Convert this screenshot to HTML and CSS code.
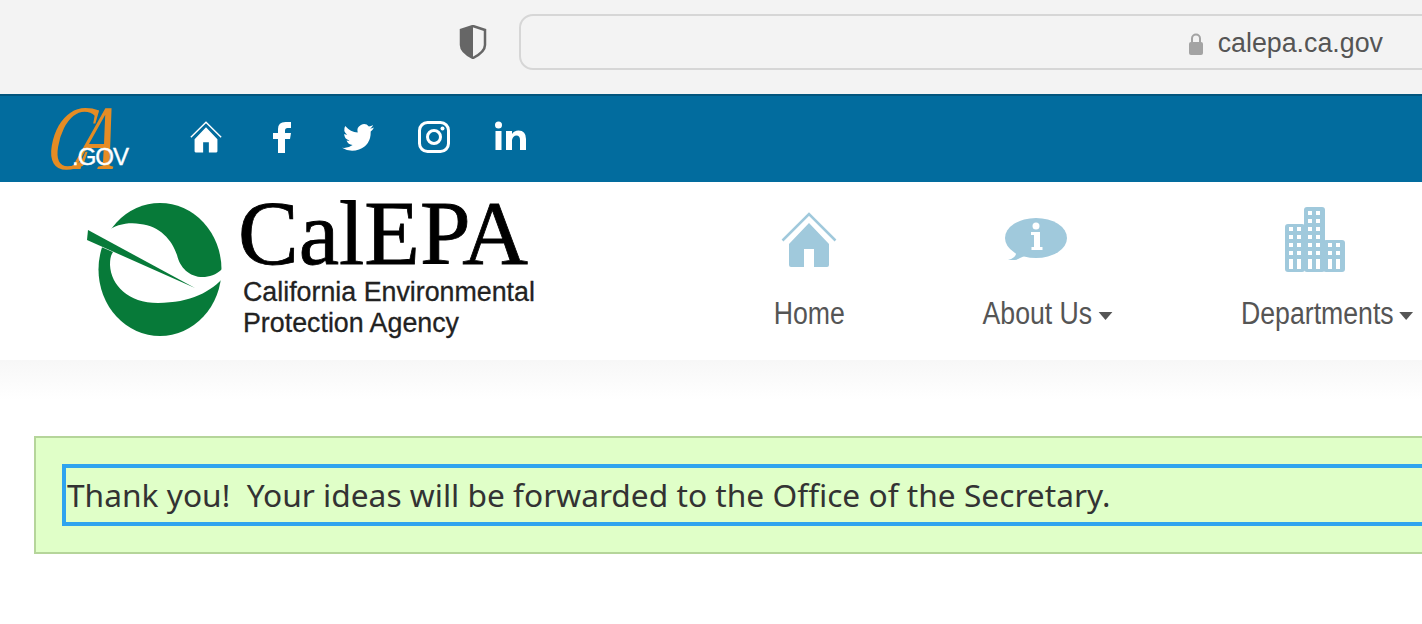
FILE: index.html
```html
<!DOCTYPE html>
<html lang="en">
<head>
    <meta charset="UTF-8">
    <meta name="viewport" content="width=device-width, initial-scale=1.0">
    <title>CalEPA - Thank you</title>
    <link rel="stylesheet" href="styles.css">
</head>
<body>
    <svg class="defs" width="0" height="0" aria-hidden="true">
        <symbol id="house" viewBox="0 0 56 56">
            <path d="M1.5 28.500 28 2l26.500 26.500" fill="none" stroke="currentColor" stroke-width="2.500"/>
            <path d="M28 11l20 21v21q0 2-2 2H33V37H23v18H10q-2 0-2-2V32z" fill="currentColor"/>
        </symbol>
    </svg>

    <!-- browser toolbar -->
    <div class="toolbar">
        <svg class="shield" viewBox="0 0 28 34">
            <path d="M14 1l12 4v15q0 7-12 13Q2 27 2 20V5z" fill="#f3f3f3" stroke="#666" stroke-width="2.500"/>
            <path d="M14 1L2 5v15q0 7 12 13z" fill="#666"/>
        </svg>
        <div class="address">
            <svg class="lock" viewBox="0 0 16 24">
                <path d="M4 11V6.500a4 4 0 0 1 8 0V11" fill="none" stroke="#a3a3a3" stroke-width="2"/>
                <rect x="1" y="10" width="14" height="13" rx="2" fill="#a3a3a3"/>
            </svg>
            <span class="url">calepa.ca.gov</span>
        </div>
    </div>

    <!-- state bar -->
    <div class="state-bar">
        <div class="ca-logo">
            <span class="ca-script">CA</span>
            <span class="ca-gov">.GOV</span>
        </div>
        <div class="social">
            <svg class="social-icon home-icon"><use href="#house"/></svg>
            <svg class="social-icon" viewBox="0 0 32 32">
                <path d="M12 32V18H7v-6h5V8q0-7 7.500-7H25v6h-3.500Q19 7 19 9.500V12h6l-1 6h-5v14z" fill="#fff"/>
            </svg>
            <svg class="social-icon" viewBox="0 0 32 32">
                <path d="M32 6.500q-1.800.8-3.800 1 2.100-1.300 2.900-3.600-2 1.200-4.200 1.600a6.500 6.500 0 0 0-11.200 6Q8.500 11 3.200 5q-2.700 5 2 8.800-1.600 0-3-.8 0 5 5.300 6.500-1.500.4-3 .1 1.500 4.200 6.100 4.500Q6.500 27.500 0 26.800q8 5 17 1.800Q29 24 28.700 10.500 30.800 8.900 32 6.500z" fill="#fff"/>
            </svg>
            <svg class="social-icon" viewBox="0 0 32 32">
                <rect x="1.500" y="1.500" width="29" height="29" rx="8" fill="none" stroke="#fff" stroke-width="3"/>
                <circle cx="16" cy="16" r="6.500" fill="none" stroke="#fff" stroke-width="3"/>
                <circle cx="24.500" cy="7.500" r="2" fill="#fff"/>
            </svg>
            <svg class="social-icon" viewBox="-1 0 32 32">
                <circle cx="3.500" cy="4" r="3.500" fill="#fff"/>
                <rect x="0.500" y="10" width="6" height="19" fill="#fff"/>
                <path d="M11 10h6v3q2-3.500 6.500-3.500Q31 9.500 31 18v11h-6V19q0-4.500-3.500-4.500T17 19v10h-6z" fill="#fff"/>
            </svg>
        </div>
    </div>

    <!-- site header -->
    <div class="site-header">
        <div class="brand">
            <svg class="brand-mark" viewBox="85 200 140 140">
                <ellipse cx="160" cy="269.500" rx="61.500" ry="66.500" fill="#077a39"/>
                <path d="M85 240l22-8c8-8 23-10 33-8 20 2 32 16 37 31 3 13 13 23 28 22 7-1 13-3 20-11l3 6c-13 18-35 31-70 31-30 0-47-18-48-38 0-7 1-10 3-13z" fill="#fff"/>
                <path d="M88 230l107 58-108-48z" fill="#077a39"/>
            </svg>
            <div class="brand-text">
                <div class="brand-name">CalEPA</div>
                <div class="brand-sub">California Environmental<br>Protection Agency</div>
            </div>
        </div>
        <div class="nav">
            <div class="nav-item nav-home">
                <svg class="nav-icon house-icon"><use href="#house"/></svg>
                <div class="nav-label">Home</div>
            </div>
            <div class="nav-item nav-about">
                <svg class="nav-icon bubble-icon" viewBox="0 0 62 42">
                    <ellipse cx="31" cy="20" rx="31" ry="20" fill="#a0c9dc"/>
                    <path d="M9 30l2 6q-1 4-8 6 8 1 12-2l7-3z" fill="#a0c9dc"/>
                    <circle cx="31" cy="8" r="3.500" fill="#fff"/>
                    <path d="M26 14h9v15h2.500v3h-11v-3H29V17h-3z" fill="#fff"/>
                </svg>
                <div class="nav-label">About Us<span class="caret"></span></div>
            </div>
            <div class="nav-item nav-depts">
                <svg class="nav-icon tower-icon" viewBox="0 0 60 65">
                    <rect x="0" y="17" width="20" height="48" rx="3" fill="#a0c9dc"/>
                    <rect x="19" y="0" width="21" height="65" rx="3" fill="#a0c9dc"/>
                    <rect x="38" y="33" width="22" height="32" rx="3" fill="#a0c9dc"/>
                    <path d="M6 20V60M14 20V60M25 4V60M33 4V60M45 36V60M53 36V60" stroke="#fff" stroke-width="4" stroke-dasharray="4 4" fill="none"/>
                    <path d="M6 52V62M14 52V62M25 52V62M33 52V62M45 52V62M53 52V62" stroke="#fff" stroke-width="4" fill="none"/>
                </svg>
                <div class="nav-label">Departments<span class="caret"></span></div>
            </div>
        </div>
    </div>
    <div class="header-fade"></div>

    <div class="alert">
        <div class="alert-focus">Thank you!&nbsp; Your ideas will be forwarded to the Office of the Secretary.</div>
    </div>
</body>
</html>
```

FILE: styles.css
```css
html, body {
    margin: 0;
    padding: 0;
    height: 624px;
    overflow: hidden;
    background: white;
}
.defs {
    display: block;
    height: 0;
}
.toolbar {
    height: 94px;
    box-sizing: border-box;
    padding: 14px 0 24px 459px;
    display: flex;
    align-items: stretch;
    background-color: #f3f3f3;
}
.shield {
    width: 28px;
    height: 34px;
    margin: 11px 32px 0 0;
}
.address {
    flex: 1;
    margin-right: -40px;
    padding: 3px 77px 0 0;
    display: flex;
    align-items: center;
    justify-content: flex-end;
    gap: 14px;
    border: 2px solid #d6d6d6;
    border-radius: 14px;
}
.lock {
    width: 16px;
    height: 24px;
}
.url {
    font-family: "Liberation Sans", Arial, sans-serif;
    font-size: 26.8px;
    color: #555;
}
.state-bar {
    height: 88px;
    box-sizing: border-box;
    padding-left: 44px;
    display: flex;
    align-items: center;
    background-color: #026c9e;
    border-top: 2px solid #02557d;
}
.ca-logo {
    position: relative;
    width: 84px;
    height: 64px;
}
.ca-script {
    display: block;
    font-family: "Liberation Serif", serif;
    font-style: italic;
    font-size: 92px;
    line-height: 62px;
    letter-spacing: -22px;
    color: #e58c24;
    transform-origin: left bottom;
    transform: skewX(-10deg) scaleX(0.72);
}
.ca-gov {
    position: absolute;
    left: 28px;
    bottom: 3px;
    font-family: "Liberation Sans", Arial, sans-serif;
    font-size: 24px;
    line-height: 22px;
    letter-spacing: -1px;
    color: white;
    -webkit-text-stroke: 0.4px white;
}
.social {
    margin: -4px 0 0 62px;
    display: flex;
    align-items: center;
    gap: 44px;
    color: white;
}
.social-icon {
    width: 32px;
    height: 32px;
}
.site-header {
    height: 178px;
    padding-left: 85px;
    display: flex;
    background: white;
}
.brand {
    display: flex;
    width: 469px;
}
.brand-mark {
    width: 140px;
    height: 140px;
    margin-top: 18px;
}
.brand-text {
    margin-left: 13px;
}
.brand-name {
    font-family: "Liberation Serif", serif;
    font-size: 91px;
    line-height: 76px;
    margin-top: 14px;
    color: black;
    -webkit-text-stroke: 0.8px black;
}
.brand-sub {
    font-family: "Liberation Sans", Arial, sans-serif;
    font-size: 26.8px;
    line-height: 31px;
    margin: 5px 0 0 5px;
    color: #222;
    -webkit-text-stroke: 0.3px #222;
    white-space: nowrap;
}
.nav {
    display: flex;
    gap: 129px;
    margin-left: 209px;
}
.nav-item {
    display: flex;
    flex-direction: column;
    align-items: center;
}
.nav-home {
    width: 92px;
}
.nav-about {
    width: 126px;
}
.nav-depts {
    width: 176px;
}
.nav-icon {
    display: block;
    flex-shrink: 0;
}
.house-icon {
    width: 56px;
    height: 56px;
    margin: 30px 0 9px;
    color: #a0c9dc;
}
.bubble-icon {
    width: 62px;
    height: 42px;
    margin: 36px 22px 17px 0;
}
.tower-icon {
    width: 60px;
    height: 65px;
    margin: 25px 24px 5px 0;
}
/* no condensed face installed, so squeeze the label */
.nav-label {
    margin-top: 17px;
    font-family: "Liberation Sans", sans-serif;
    font-size: 31px;
    line-height: 40px;
    color: #555;
    white-space: nowrap;
    transform: scaleX(0.86);
}
.caret {
    display: inline-block;
    margin-left: 7px;
    vertical-align: middle;
    border-left: 8px solid transparent;
    border-right: 8px solid transparent;
    border-top: 8px solid #555;
}
.header-fade {
    height: 40px;
    background: linear-gradient(#f7f7f7, white);
}
.alert {
    width: 1500px;
    margin: 36px 0 0 34px;
    padding: 26px;
    box-sizing: border-box;
    background-color: #e0ffc8;
    border: 2px solid #b5d59a;
}
.alert-focus {
    border: 4px solid #2fa4ef;
    padding-left: 1px;
    font-family: "Noto Sans", "Open Sans", sans-serif;
    font-size: 31.7px;
    line-height: 54px;
    color: #333;
}
```
